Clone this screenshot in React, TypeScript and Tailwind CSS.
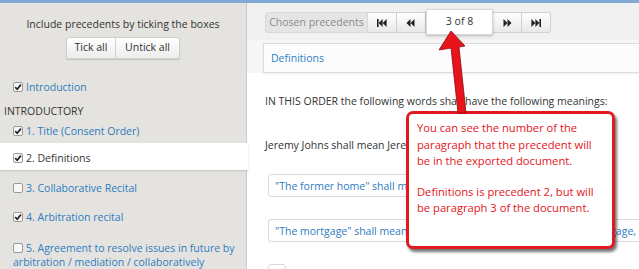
import React from "react";

const Check = ({ checked }: { checked: boolean }) => (
  <svg width="10" height="10" viewBox="0 0 10 10" className="shrink-0">
    <rect x="0.5" y="0.5" width="9" height="9" rx="1.5" fill="#f7f7f7" stroke="#9a9a9a" />
    {checked && <path d="M2.2 5.2 L4.2 7.3 L7.9 2.6" fill="none" stroke="#222" strokeWidth="1.7" />}
  </svg>
);

const NavIcon = ({ kind }: { kind: "first" | "prev" | "next" | "last" }) => {
  const flip = kind === "next" || kind === "last";
  const bar = kind === "first" || kind === "last";
  return (
    <svg width="10" height="8" viewBox="0 0 10 8" style={{ transform: flip ? "scaleX(-1)" : undefined }}>
      {bar && <rect x="0" y="0" width="1.6" height="8" fill="#222" />}
      <polygon points={bar ? "1.6,4 5.6,0 5.6,8" : "0.5,4 4.5,0 4.5,8"} fill="#222" />
      <polygon points={bar ? "5.6,4 9.6,0 9.6,8" : "4.5,4 8.5,0 8.5,8"} fill="#222" />
    </svg>
  );
};

const Item = ({
  checked,
  label,
  className = "",
}: {
  checked: boolean;
  label: React.ReactNode;
  className?: string;
}) => (
  <div className={`flex items-center gap-[3px] pl-[13px] text-[10.5px] leading-[16px] text-[#2d7cc0] whitespace-nowrap ${className}`}>
    <Check checked={checked} />
    <span>{label}</span>
  </div>
);

export default function App() {
  return (
    <div className="relative w-[639px] h-[269px] overflow-hidden flex flex-col font-['Open_Sans',sans-serif] bg-white">
      <div className="h-[3px] bg-[#80aad3] shrink-0" />
      <div className="flex flex-1 min-h-0">
        {/* Sidebar */}
        <aside className="w-[247px] shrink-0 bg-[#e5e3df] border-r border-[#cbc9c5] flex flex-col relative z-10">
          <div className="pt-[13px] text-center text-[10.5px] leading-[16px] text-[#333] whitespace-nowrap">
            Include precedents by ticking the boxes
          </div>
          <div className="mt-[5px] flex justify-center">
            <div className="flex h-[22px] text-[10.5px] text-[#333] shadow-[0_1px_1px_rgba(0,0,0,0.12)]">
              <button className="w-[50px] border border-[#cfcfcf] rounded-l-[3px] bg-gradient-to-b from-white to-[#ededed]">
                Tick all
              </button>
              <button className="w-[64px] border border-l-0 border-[#cfcfcf] rounded-r-[3px] bg-gradient-to-b from-white to-[#ededed]">
                Untick all
              </button>
            </div>
          </div>
          <Item checked label="Introduction" className="mt-[20px]" />
          <div className="mt-[8px] pl-[4px] text-[10.5px] leading-[16px] text-[#333]">INTRODUCTORY</div>
          <Item checked label="1. Title (Consent Order)" className="mt-[4px]" />
          <div className="mt-[4px] h-[32px] w-[248px] bg-white shadow-[0_1px_2px_rgba(0,0,0,0.15)] flex items-center">
            <Item checked label={<span className="text-[#333]">2. Definitions</span>} className="mt-[2px]" />
          </div>
          <Item checked={false} label="3. Collaborative Recital" className="mt-[10px]" />
          <Item checked label="4. Arbitration recital" className="mt-[13px]" />
          <div className="mt-[16px] pl-[13px] text-[10.5px] leading-[14px] text-[#2d7cc0] whitespace-nowrap">
            <span className="inline-block align-[-1px] mr-[3px]">
              <Check checked={false} />
            </span>
            5. Agreement to resolve issues in future by
            <br />
            arbitration / mediation / collaboratively
          </div>
        </aside>

        {/* Main */}
        <main className="flex-1 min-w-0 flex flex-col bg-white">
          <div className="h-[37px] shrink-0 bg-[#f1f1f1] flex items-start pl-[18px] pt-[9px]">
            <div className="flex h-[21px] text-[10.5px] whitespace-nowrap">
              <div className="w-[103px] flex items-center justify-center bg-[#e5e5e5] border border-[#d8d8d8] rounded-l-[3px] text-[#8a8a8a]">
                Chosen precedents
              </div>
              <div className="w-[29px] flex items-center justify-center border border-l-0 border-[#d0d0d0] bg-gradient-to-b from-white to-[#e9e9e9]">
                <NavIcon kind="first" />
              </div>
              <div className="w-[29px] flex items-center justify-center border border-l-0 border-[#d0d0d0] bg-gradient-to-b from-white to-[#e9e9e9]">
                <NavIcon kind="prev" />
              </div>
              <div className="w-[67px] h-[26px] -mt-[3px] flex items-center justify-center bg-white border border-[#d8d8d8] rounded-[2px] shadow-[0_1px_3px_rgba(0,0,0,0.25)] text-[#333] relative z-10">
                3 of 8
              </div>
              <div className="w-[29px] flex items-center justify-center border border-l-0 border-[#d0d0d0] bg-gradient-to-b from-white to-[#e9e9e9]">
                <NavIcon kind="next" />
              </div>
              <div className="w-[29px] flex items-center justify-center border border-l-0 border-[#d0d0d0] rounded-r-[3px] bg-gradient-to-b from-white to-[#e9e9e9]">
                <NavIcon kind="last" />
              </div>
            </div>
          </div>
          <div className="bg-[#f6f6f6] pl-[16px] pt-[3px] shrink-0">
            <div className="h-[30px] w-[400px] bg-[#fcfcfc] border border-r-0 border-[#dcdcdc] shadow-[0_1px_2px_rgba(0,0,0,0.08)] flex items-center pl-[7px] pt-[1px] text-[10.5px] text-[#2d7cc0]">
              Definitions
            </div>
          </div>
          <div className="pl-[18px] text-[10.5px] leading-[16px] text-[#333]">
            <div className="mt-[20px] whitespace-nowrap">
              IN THIS ORDER the following words shall have the following meanings:
            </div>
            <div className="mt-[28px] whitespace-nowrap">Jeremy Johns shall mean Jeremy Johns of the former home</div>
            <div className="mt-[21px] ml-[3px] w-[330px] h-[23px] border border-[#dadada] rounded-[3px] flex items-center pl-[6px] text-[#2d7cc0] whitespace-nowrap overflow-hidden">
              "The former home" shall mean the property
            </div>
            <div className="mt-[22px] ml-[3px] w-[371px] h-[23px] border border-r-0 border-[#dadada] rounded-l-[3px] flex items-center justify-between pl-[6px] pr-[3px] text-[#2d7cc0] whitespace-nowrap">
              <span>"The mortgage" shall mean the</span>
              <span>mortgage,</span>
            </div>
            <div className="mt-[22px] ml-[3px] w-[18px] h-[10px] border border-[#dadada] rounded-[3px]" />
          </div>
        </main>
      </div>

      {/* Callout */}
      <div className="absolute left-[406px] top-[111px] w-[209px] h-[138px] bg-white border-[3px] border-[#e11a22] rounded-[7px] shadow-[2px_3px_3px_rgba(0,0,0,0.55)] pl-[8px] pt-[6px] text-[11.2px] leading-[16.5px] text-[#e3141c] z-20">
        <div className="whitespace-nowrap">You can see the number of the</div>
        <div className="whitespace-nowrap">paragraph that the precedent will</div>
        <div className="whitespace-nowrap">be in the exported document.</div>
        <div className="h-[14px]" />
        <div className="whitespace-nowrap">Definitions is precedent 2, but will</div>
        <div className="whitespace-nowrap">be paragraph 3 of the document.</div>
      </div>

      {/* Arrow */}
      <svg className="absolute left-0 top-0 z-30 pointer-events-none" width="639" height="269" viewBox="0 0 639 269">
        <polygon
          points="451,31 465,46 459,47 466,113 458,113 451,48 439,50"
          fill="#e8141c"
          stroke="#8c0a0e"
          strokeWidth="0.8"
          strokeLinejoin="round"
        />
      </svg>
    </div>
  );
}
